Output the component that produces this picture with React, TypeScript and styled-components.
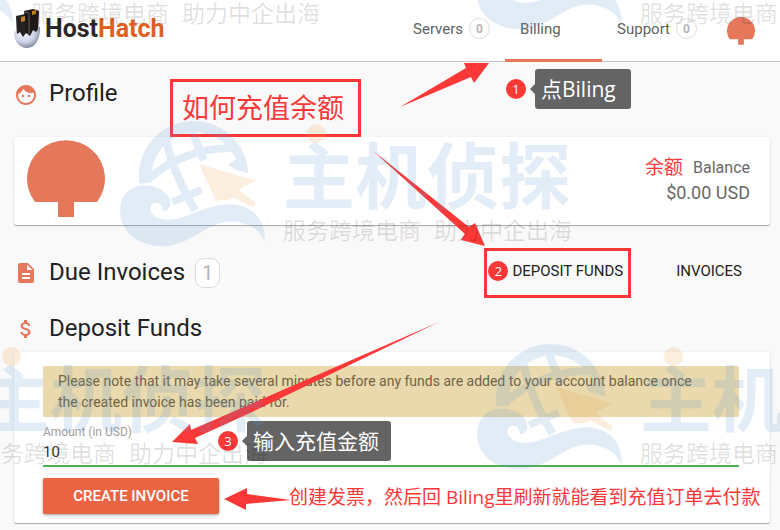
import React from 'react';
import styled, { createGlobalStyle } from 'styled-components';
import { MdFace, MdDescription, MdAttachMoney } from 'react-icons/md';

const accent = '#e5775a';
const red = '#fb3838';
const cjk = '"Open Sans", "Noto Sans CJK SC", sans-serif';

const GlobalStyle = createGlobalStyle`
  * { box-sizing: border-box; }
  body {
    margin: 0;
    background: #f9f9f9;
    font-family: Roboto, "Noto Sans CJK SC", sans-serif;
    color: #212121;
  }
  button, input { font-family: inherit; }
`;

const Page = styled.div`
  position: relative;
  min-height: 100vh;
  overflow: hidden;
`;

const Header = styled.header`
  display: flex;
  justify-content: space-between;
  height: 62px;
  padding: 0 25px 0 13px;
  background: #fff;
  border-bottom: 1px solid #c4c4c4;
`;

const Brand = styled.a`
  display: flex;
  align-items: flex-start;
  gap: 4px;
  padding-top: 8px;
  text-decoration: none;
`;

const BrandName = styled.span<{ $warm?: boolean }>`
  color: ${(p) => (p.$warm ? '#e0601f' : '#2b2728')};
`;

const BrandText = styled.span`
  font-size: 25px;
  font-weight: 700;
  line-height: 42px;
`;

const Nav = styled.nav`
  display: flex;
`;

const Tab = styled.a<{ $active?: boolean }>`
  display: flex;
  align-items: center;
  gap: 6px;
  height: 62px;
  padding: 0 15px 2px;
  min-width: 97px;
  font-size: 15px;
  color: #5f5f5f;
  text-decoration: none;
  border-bottom: 3px solid ${(p) => (p.$active ? accent : 'transparent')};
`;

const Count = styled.span`
  display: grid;
  place-items: center;
  width: 21px;
  height: 21px;
  border: 1px solid #dcdcdc;
  border-radius: 50%;
  background: #fff;
  color: #b5b5b5;
  font-size: 12px;
  font-weight: 700;
`;

const Account = styled.button`
  display: flex;
  align-items: center;
  padding: 0;
  margin-left: 15px;
  border: 0;
  background: none;
`;

const Main = styled.main`
  padding: 0 10px 0 14px;
`;

const SectionHead = styled.div<{ $height: number; $top?: number; $bottom?: number }>`
  display: flex;
  align-items: center;
  height: ${(p) => p.$height}px;
  padding-top: ${(p) => p.$top ?? 0}px;
  padding-bottom: ${(p) => p.$bottom ?? 0}px;
  color: ${accent};
`;

const Heading = styled.h2`
  margin: 0 0 0 11px;
  padding-bottom: 3px;
  font-size: 24px;
  font-weight: 400;
  line-height: 28px;
  color: #212121;
`;

const InvoiceCount = styled.span`
  display: grid;
  place-items: center;
  width: 25px;
  height: 30px;
  margin-left: 10px;
  border: 1px solid #dcdcdc;
  border-radius: 9px;
  background: #fff;
  color: #b5b5b5;
  font-size: 20px;
`;

const Card = styled.section`
  background: #fff;
  border-radius: 2px;
  box-shadow: 0 1px 1px rgba(0, 0, 0, 0.32), 0 0 2px rgba(0, 0, 0, 0.08);
`;

const ProfileCard = styled(Card)`
  display: flex;
  justify-content: space-between;
  height: 88px;
  padding: 3px 20px 0 13px;
`;

const Balance = styled.div`
  display: flex;
  flex-direction: column;
  align-items: flex-end;
  padding-top: 14px;
  color: #686868;
`;

const BalanceLabel = styled.div`
  display: flex;
  align-items: center;
  gap: 10px;
  height: 26px;
  font-size: 16px;
`;

const BalanceNote = styled.span`
  font-family: ${cjk};
  font-size: 19px;
  line-height: 24px;
  color: ${red};
`;

const Amount = styled.div`
  font-size: 18px;
  line-height: 26px;
`;

const Actions = styled.div`
  display: flex;
  align-items: center;
  gap: 30px;
  margin-left: auto;
`;

const TextButton = styled.button<{ $marked?: boolean }>`
  display: flex;
  align-items: center;
  gap: 4px;
  height: 50px;
  padding: ${(p) => (p.$marked ? '0 5px 5px 1px' : '0 28px 5px 15px')};
  border: ${(p) => (p.$marked ? `3px solid ${red}` : '0')};
  background: none;
  font-size: 15px;
  color: #212121;
`;

const Step = styled.span`
  display: grid;
  place-items: center;
  width: 20px;
  height: 20px;
  border-radius: 50%;
  background: ${red};
  color: #fff;
  font-family: ${cjk};
  font-size: 13px;
  line-height: 20px;
`;

const DepositCard = styled(Card)`
  padding: 14px 31px 9px 29px;
`;

const Notice = styled.p`
  margin: 0;
  padding: 5px 28px 4px 15px;
  border-radius: 2px;
  background: #e9d9ac;
  color: #706346;
  font-size: 14px;
  line-height: 21px;
`;

const Field = styled.div`
  display: flex;
  flex-direction: column;
  padding-top: 8px;
`;

const Label = styled.label`
  font-size: 12px;
  line-height: 14px;
  color: #9e9e9e;
`;

const Input = styled.input`
  height: 28px;
  padding: 0 0 1px;
  border: 0;
  border-bottom: 2px solid #4caf50;
  background: none;
  color: #333;
  font-size: 15px;
  outline: none;
`;

const Submit = styled.button`
  display: block;
  width: 176px;
  height: 36px;
  margin-top: 11px;
  border: 0;
  border-radius: 2px;
  background: #e96443;
  box-shadow: 0 1px 3px rgba(0, 0, 0, 0.4);
  color: #fff;
  font-size: 15px;
  font-weight: 500;
`;

const Overlay = styled.div`
  position: absolute;
  inset: 0;
  overflow: hidden;
  pointer-events: none;
`;

const Arrows = styled.svg`
  position: absolute;
  top: 0;
  left: 0;
`;

const Pinned = styled.div<{ $x: number; $y: number }>`
  position: absolute;
  left: ${(p) => p.$x}px;
  top: ${(p) => p.$y}px;
`;

const TitleNote = styled(Pinned)`
  padding: 0 14px 0 9px;
  border: 3px solid ${red};
  color: ${red};
  font-family: ${cjk};
  font-size: 27px;
  line-height: 52px;
`;

const PlainNote = styled(Pinned)`
  color: ${red};
  font-family: ${cjk};
  font-size: 19px;
  line-height: 28px;
  white-space: nowrap;
`;

const Callout = styled(Pinned)`
  display: flex;
  align-items: center;
  gap: 9px;
`;

const Bubble = styled.div`
  position: relative;
  min-width: 96px;
  height: 40px;
  padding: 0 12px 0 6px;
  border-radius: 3px;
  background: #646464;
  color: #fff;
  font-family: ${cjk};
  font-size: 21px;
  line-height: 40px;
  white-space: nowrap;

  &::before {
    content: '';
    position: absolute;
    left: -5px;
    top: 15px;
    border: 5px solid transparent;
    border-left: 0;
    border-right-color: #646464;
  }
`;

const Mark = styled(Pinned)`
  display: flex;
  gap: 17px;
  width: 460px;
`;

const MarkText = styled.div`
  position: relative;
  display: flex;
  flex-direction: column;
  padding-top: 16px;
  white-space: nowrap;
  font-family: "Noto Sans CJK SC", sans-serif;
`;

const MarkName = styled.div`
  font-size: 72px;
  font-weight: 700;
  line-height: 72px;
  color: rgba(90, 149, 214, 0.17);
`;

const MarkDot = styled.i`
  position: absolute;
  left: 24px;
  top: 4px;
  width: 19px;
  height: 19px;
  border-radius: 50%;
  background: rgba(240, 155, 60, 0.17);
`;

const MarkLine = styled.div`
  display: flex;
  gap: 13px;
  padding-top: 7px;
  font-size: 23px;
  line-height: 28px;
  color: rgba(0, 0, 0, 0.13);
`;

function Avatar({ size }: { size: number }) {
  return (
    <svg width={size} height={size} viewBox="0 0 78 78" aria-hidden="true">
      <path d="M8 62A39 38.500 0 1 1 70 62H47V77H31V62Z" fill={accent} />
    </svg>
  );
}

function EggLogo() {
  return (
    <svg width="28" height="41" viewBox="0 0 28 41" aria-hidden="true">
      <defs>
        <radialGradient id="shell" cx="0.4" cy="0.35" r="0.7">
          <stop offset="0" stopColor="#f3f5fc" />
          <stop offset="0.55" stopColor="#ced3e8" />
          <stop offset="1" stopColor="#777c91" />
        </radialGradient>
      </defs>
      <path d="M3 8L12 6L17 9V30H4Z" fill="#272222" />
      <path d="M11 3L20 1L26 3L25 26L13 29Z" fill="#1d1919" />
      <path d="M11 4L16 5V27" fill="none" stroke="#655c5a" />
      <path d="M8 9L12 8V13L8 14ZM19 3L23 2V6L19 7Z" fill="#c9821e" />
      <path d="M1 22L4 26L7 24L10 29L13 25L17 28L20 22L23 24L27 18C28 31 22 40 14 40C6 40 0 32 1 22Z" fill="url(#shell)" />
    </svg>
  );
}

function Globe() {
  return (
    <svg width="146" height="127" viewBox="30 30 438 382" aria-hidden="true">
      <g opacity="0.17" fill="#5a95d6">
        <path d="M88 222A164.500 164.500 0 1 1 415 190L373 178L356 164L378 147A132 132 0 0 0 125 190V218Z" />
        <g fill="none" stroke="#5a95d6">
          <path d="M166 80Q186 184 256 302" strokeWidth="24" />
          <path d="M244 56L281 151" strokeWidth="24" />
          <path d="M116 207Q220 116 364 114" strokeWidth="24" />
          <path d="M186 276L275 240" strokeWidth="22" />
        </g>
        <path d="M30 305C30 250 65 226 108 227C150 228 182 255 181 283C180 300 165 307 158 302C158 285 145 275 132 280C117 286 118 304 130 316C145 332 175 333 205 326C260 311 310 280 370 284C430 290 468 330 464 396C450 355 400 330 350 336C290 345 250 395 180 408C110 418 30 380 30 305Z" />
      </g>
      <path d="M267 162L438 213L385 240L438 280L430 294L368 262L360 270L318 272Z" fill="#f09b3c" opacity="0.17" />
    </svg>
  );
}

function Watermark({ x, y }: { x: number; y: number }) {
  return (
    <Mark $x={x} $y={y}>
      <Globe />
      <MarkText>
        <MarkDot />
        <MarkName>主机侦探</MarkName>
        <MarkLine>
          <span>服务跨境电商</span>
          <span>助力中企出海</span>
        </MarkLine>
      </MarkText>
    </Mark>
  );
}

const marks = [
  { x: -132, y: -97 },
  { x: 477, y: -97 },
  { x: 120, y: 120 },
  { x: -185, y: 343 },
  { x: 477, y: 343 },
];

export default function App() {
  return (
    <Page>
      <GlobalStyle />
      <Header>
        <Brand href="#">
          <EggLogo />
          <BrandText>
            <BrandName>Host</BrandName>
            <BrandName $warm>Hatch</BrandName>
          </BrandText>
        </Brand>
        <Nav>
          <Tab href="#servers">Servers <Count>0</Count></Tab>
          <Tab href="#billing" $active>Billing</Tab>
          <Tab href="#support">Support <Count>0</Count></Tab>
          <Account aria-label="Account"><Avatar size={28} /></Account>
        </Nav>
      </Header>

      <Main>
        <SectionHead $height={75} $bottom={10}>
          <MdFace size={24} />
          <Heading>Profile</Heading>
        </SectionHead>
        <ProfileCard>
          <Avatar size={78} />
          <Balance>
            <BalanceLabel><BalanceNote>余额</BalanceNote>Balance</BalanceLabel>
            <Amount>$0.00 USD</Amount>
          </Balance>
        </ProfileCard>

        <SectionHead $height={88} $top={8}>
          <MdDescription size={24} />
          <Heading>Due Invoices</Heading>
          <InvoiceCount>1</InvoiceCount>
          <Actions>
            <TextButton $marked><Step>2</Step>DEPOSIT FUNDS</TextButton>
            <TextButton>INVOICES</TextButton>
          </Actions>
        </SectionHead>

        <SectionHead $height={39} $bottom={7}>
          <MdAttachMoney size={24} />
          <Heading>Deposit Funds</Heading>
        </SectionHead>
        <DepositCard>
          <Notice>
            Please note that it may take several minutes before any funds are added to your account
            balance once the created invoice has been paid for.
          </Notice>
          <Field>
            <Label htmlFor="amount">Amount (in USD)</Label>
            <Input id="amount" defaultValue="10" />
          </Field>
          <Submit>CREATE INVOICE</Submit>
        </DepositCard>
      </Main>

      <Overlay>
        <Arrows width="780" height="530" viewBox="0 0 780 530" fill={red} aria-hidden="true">
          <path d="M400 107L466 68L464 63H489L474 83L471 77Z" />
          <path d="M372 150L469 227L475 223L485 246L461 240L465 234Z" />
          <path d="M439 322L191 430L190 424L172 442L198 444L195 438L250 413Z" />
          <path d="M224 499L247 488V494L291 500L246 504V510Z" />
        </Arrows>
        <TitleNote $x={170} $y={79}>如何充值余额</TitleNote>
        <Callout $x={506} $y={69}><Step>1</Step><Bubble>点Biling</Bubble></Callout>
        <Callout $x={218} $y={421}><Step>3</Step><Bubble>输入充值金额</Bubble></Callout>
        <PlainNote $x={289} $y={483}>创建发票，然后回 Biling里刷新就能看到充值订单去付款</PlainNote>
        {marks.map((m) => (
          <Watermark key={`${m.x},${m.y}`} x={m.x} y={m.y} />
        ))}
      </Overlay>
    </Page>
  );
}
